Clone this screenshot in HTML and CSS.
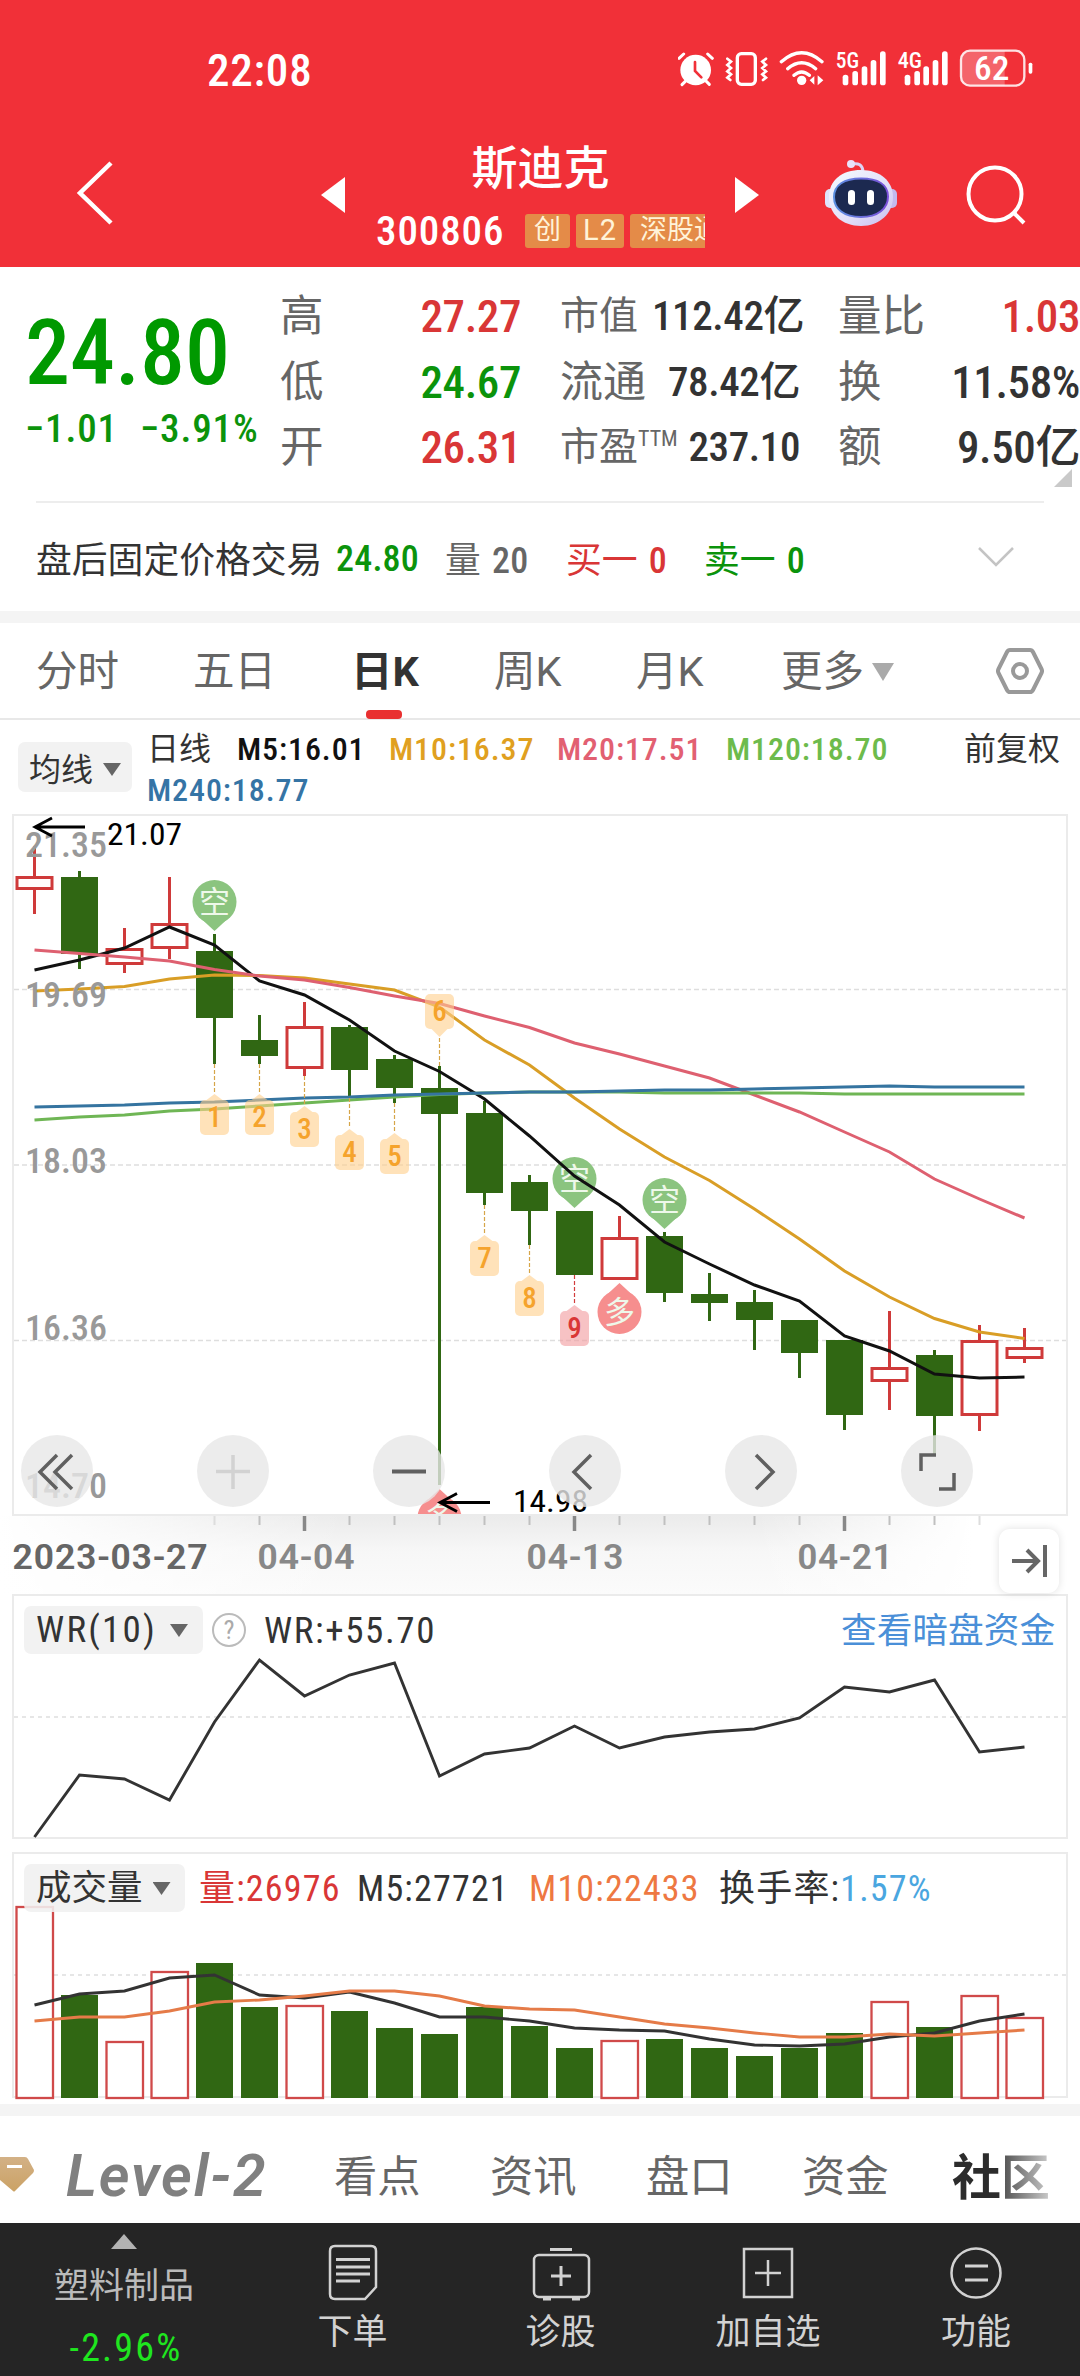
FILE: index.html
```html
<!DOCTYPE html>
<html lang="zh-CN">
<head>
<meta charset="utf-8">
<title>斯迪克 300806</title>
<link rel="stylesheet" href="styles.css">
</head>
<body>
<header class="header">
  <div class="status">
    <span class="clock">22:08</span>
    <svg class="status-icons" viewBox="415 40 1065 120">
      <g fill="none" stroke="#fff" stroke-width="7" stroke-linecap="round">
        <path d="M418 71l14-13M518 71l-14-13" stroke-width="9"/>
        <circle cx="468" cy="106" r="46" fill="#fff" stroke="none"/>
        <path d="M437 140l-10 10M500 140l9 9" stroke-width="9"/>
        <path d="M466 82v27l19 19" stroke="#f13038" stroke-width="8"/>
        <rect x="593" y="57" width="54" height="92" rx="12" stroke-width="10"/>
        <path d="M563 72l11 9-11 10 11 9-11 10 11 9-11 10 9 7M679 72l-11 9 11 10-11 9 11 10-11 9 11 10-9 7" stroke-width="8"/>
        <path d="M725 81q61-54 122 0M744 102q42-36 84 0M763 122q23-20 46 0" stroke-width="10"/>
      </g>
      <g fill="#fff">
        <circle cx="786" cy="137" r="14"/>
        <path d="M810 137l14-13v26zM851 137l-17-15v30z"/>
        <rect x="909" y="120" width="17" height="32" rx="8"/><rect x="938" y="109" width="17" height="43" rx="8"/><rect x="966" y="95" width="17" height="57" rx="8"/><rect x="993" y="76" width="17" height="76" rx="8"/><rect x="1021" y="50" width="17" height="102" rx="8"/>
        <rect x="1095" y="120" width="17" height="32" rx="8"/><rect x="1124" y="109" width="17" height="43" rx="8"/><rect x="1151" y="95" width="17" height="57" rx="8"/><rect x="1179" y="76" width="17" height="76" rx="8"/><rect x="1207" y="50" width="17" height="102" rx="8"/>
        <path d="M1288 49h107v104h-107q-25-2-25-27v-50q0-25 25-27z" opacity=".25"/>
        <rect x="1467" y="84" width="11" height="33" rx="5"/>
        <text x="888" y="99" font-size="64" textLength="70" lengthAdjust="spacingAndGlyphs">5G</text>
        <text x="1074" y="99" font-size="64" textLength="73" lengthAdjust="spacingAndGlyphs">4G</text>
        <text x="1303" y="136" font-size="98" textLength="106" lengthAdjust="spacingAndGlyphs">62</text>
      </g>
      <rect x="1264" y="48" width="190" height="105" rx="27" fill="none" stroke="#fff" stroke-width="7" opacity=".85"/>
    </svg>
  </div>
  <nav class="titlebar">
    <svg class="back" viewBox="0 0 40 66"><path d="M35 3L4 33l31 30" fill="none" stroke="#fff" stroke-width="4.5"/></svg>
    <svg class="arrow" viewBox="0 0 24 36"><path d="M24 0v36L0 18z" fill="#fff"/></svg>
    <div class="stock">
      <h1>斯迪克</h1>
      <div class="code-row">
        <span class="code">300806</span>
        <span class="tag">创</span><span class="tag l2">L2</span><span class="tag cut">深股通</span>
      </div>
    </div>
    <svg class="arrow" viewBox="0 0 24 36"><path d="M0 0v36l24-18z" fill="#fff"/></svg>
    <svg class="robot" viewBox="0 0 72 68">
      <defs>
        <linearGradient id="shell" x1="0" x2="1" y1="0" y2="1"><stop offset="0" stop-color="#f4fbff"/><stop offset=".6" stop-color="#e3def8"/><stop offset="1" stop-color="#c6bdf0"/></linearGradient>
        <linearGradient id="rim" x1="0" x2="1"><stop offset="0" stop-color="#5b8fe0"/><stop offset="1" stop-color="#7a4fd8"/></linearGradient>
      </defs>
      <path d="M27 5q10-2 11 7" fill="none" stroke="#dcd3f5" stroke-width="3"/>
      <circle cx="26" cy="5" r="4" fill="#e9e2fa"/>
      <rect x="0" y="30" width="12" height="19" rx="5" fill="#dfe3fb"/><rect x="60" y="30" width="12" height="19" rx="5" fill="#c3b9ee"/>
      <path d="M36 11C55 11 68 22 68 38S55 67 36 67 4 55 4 38 17 11 36 11z" fill="url(#shell)"/>
      <path d="M36 19.500c17 0 27 6 27 18S53 58 36 58 9 50 9 38s10-18.500 27-18.500z" fill="#1c2950" stroke="url(#rim)" stroke-width="2"/>
      <rect x="23" y="31" width="7" height="15" rx="3.500" fill="#fff"/><rect x="42" y="31" width="7" height="15" rx="3.500" fill="#fff"/>
    </svg>
    <svg class="search" viewBox="0 0 62 62"><g fill="none" stroke="#fff" stroke-width="4"><circle cx="30" cy="30" r="26.500"/><path d="M48 48l11 11"/></g></svg>
  </nav>
</header>

<section class="quote">
  <div class="last">
    <div class="price">24.80</div>
    <div class="change"><span>−1.01</span><span>−3.91%</span></div>
  </div>
  <dl class="stats">
    <dt>高</dt><dd class="up">27.27</dd>
    <dt class="mid">市值</dt><dd class="sm">112.42亿</dd>
    <dt class="last-label">量比</dt><dd class="up">1.03</dd>
    <dt>低</dt><dd class="down">24.67</dd>
    <dt class="mid wide">流通</dt><dd class="sm">78.42亿</dd>
    <dt class="last-label">换</dt><dd>11.58%</dd>
    <dt>开</dt><dd class="up">26.31</dd>
    <dt class="mid">市盈<sup>TTM</sup></dt><dd class="sm">237.10</dd>
    <dt class="last-label">额</dt><dd>9.50亿</dd>
  </dl>
  <i class="corner"></i>
</section>
<section class="fixed-price">
  <span class="fp-title">盘后固定价格交易</span><span class="down fp-price">24.80</span>
  <span class="gray fp-vol">量 <b>20</b></span><span class="up fp-buy">买一 <b>0</b></span><span class="down fp-sell">卖一 <b>0</b></span>
  <svg class="expand" viewBox="0 0 36 20"><path d="M1 1l17 17L35 1" fill="none" stroke="#c4c4c4" stroke-width="2.500"/></svg>
</section>
<div class="band"></div>

<nav class="periods">
  <span>分时</span><span>五日</span><span class="active">日K</span><span>周K</span><span>月K</span><span>更多<i class="tri"></i></span>
  <svg class="hex" viewBox="0 0 48 46"><g fill="none" stroke="#999" stroke-width="4"><path d="M14 2h20q2 0 3 2l8.500 17q1 2 0 4L37 42q-1 2-3 2H14q-2 0-3-2L2.500 25q-1-2 0-4L11 4q1-2 3-2z"/><circle cx="24" cy="23" r="7"/></g></svg>
</nav>

<section class="averages">
  <button class="picker ma">均线<i class="tri dark"></i></button>
  <div class="ma-values">
    <span class="day">日线</span><span class="m5">M5:16.01</span><span class="m10">M10:16.37</span><span class="m20">M20:17.51</span><span class="m120">M120:18.70</span>
    <span class="m240">M240:18.77</span>
  </div>
  <span class="adjust">前复权</span>
</section>

<section class="kline">
  <svg id="kline" viewBox="0 814 1080 702"></svg>
  <div class="controls">
    <svg viewBox="0 0 72 72"><path d="M36 20L19 37l17 17M51 20L34 37l17 17"/></svg>
    <svg viewBox="0 0 72 72" class="off"><path d="M36 20v34M19 36.500h34"/></svg>
    <svg viewBox="0 0 72 72"><path d="M19 36.500h34" stroke-width="4"/></svg>
    <svg viewBox="0 0 72 72"><path d="M42 20L25 37l17 17"/></svg>
    <svg viewBox="0 0 72 72"><path d="M31 20l17 17-17 17"/></svg>
    <svg viewBox="0 0 72 72"><path d="M20 36V20h15M38 54h15V38"/></svg>
  </div>
</section>
<section class="axis">
  <svg id="axis" viewBox="0 1516 1080 78"></svg>
  <button class="to-end"><svg viewBox="0 0 60 64"><path d="M13 32h25M28 21l11 11-11 11M46 16v32" fill="none" stroke="#666" stroke-width="4"/></svg></button>
</section>

<section class="panel wr">
  <svg class="plot" id="wr" viewBox="0 1594 1080 245"></svg>
  <div class="legend">
    <button class="picker wr-pick">WR(10)<i class="tri dark"></i></button>
    <span class="help">?</span><span class="wr-value">WR:+55.70</span>
    <a class="link">查看暗盘资金</a>
  </div>
</section>
<section class="panel volume">
  <svg class="plot" id="volume" viewBox="0 1852 1080 248"></svg>
  <div class="legend">
    <button class="picker">成交量<i class="tri dark"></i></button>
    <span class="up v1">量:<b>26976</b></span><span class="v2">M5:27721</span><span class="v3">M10:22433</span><span class="v4">换手率:<b>1.57%</b></span>
  </div>
</section>
<div class="band"></div>

<nav class="sections">
  <svg class="gem" viewBox="0 0 36 36"><defs><linearGradient id="gold" x1="0" x2="0" y1="0" y2="1"><stop offset="0" stop-color="#d3b186"/><stop offset="1" stop-color="#cba265"/></linearGradient></defs><path d="M0 0h25q2 0 3 2l6 11q0 2-1 3L15 34q-1 1-2 0L0 23z" fill="url(#gold)"/><path d="M7 9.500h15" stroke="#fff" stroke-width="3"/></svg>
  <span class="level">Level-2</span><span>看点</span><span>资讯</span><span>盘口</span><span>资金</span><span class="current">社区</span>
</nav>

<footer class="toolbar">
  <div class="sector"><i></i><span>塑料制品</span><b>-2.96%</b></div>
  <div class="tool"><svg viewBox="0 0 60 60"><path d="M12 4h36q5 0 5 5v36L42 57H12q-5 0-5-5V9q0-5 5-5z"/><path d="M13 17.500h34M13 25h34M13 32h34M13 39h24" stroke-width="2.800"/></svg><span>下单</span></div>
  <div class="tool"><svg viewBox="0 0 60 60"><rect x="3" y="13" width="55" height="42" rx="5"/><path d="M19 7.500h22M30 24v20M20 34h20M12 57h8M41 57h8" stroke-width="3"/></svg><span>诊股</span></div>
  <div class="tool"><svg viewBox="0 0 60 60"><path d="M6 7h48v48H6zM30 18v26M17 31h26"/></svg><span>加自选</span></div>
  <div class="tool"><svg viewBox="0 0 60 60"><circle cx="30" cy="31" r="24.500"/><path d="M19 24h23M19 38h23" stroke-width="3"/></svg><span>功能</span></div>
</footer>
<script src="charts.js"></script>
</body>
</html>
```
FILE: styles.css
```css
* { box-sizing: border-box; margin: 0; padding: 0; }
body {
  width: 1080px; height: 2376px; overflow: hidden; background: #fff; color: #333;
  font-family: Roboto, "Noto Sans CJK SC", sans-serif; font-stretch: 87.5%;
}
svg { display: block; flex: none; }
svg text { font-family: Roboto, "Noto Sans CJK SC", sans-serif; }
button { border: 0; font: inherit; color: inherit; }
b { font-weight: inherit; }
.up { color: #d93636; }
.down { color: #0b930b; }
.gray { color: #666; }
.band { height: 12px; background: #f4f4f4; }

.header { height: 267px; background: #f13038; color: #fff; }
.status { height: 120px; padding: 0 27px 0 207px; display: flex; justify-content: space-between; }
.clock { font-size: 45px; font-weight: 500; line-height: 53px; margin-top: 44px; letter-spacing: .8px; }
.status-icons { width: 355px; height: 40px; margin: 48px 20px 0 0; }
.status-icons text { font-weight: 500; }
.titlebar { height: 147px; display: grid; grid-template-columns: 76px 40px 205px 24px 31px 329px 30px 24px 66px 72px 68px 62px; }
.titlebar > * { grid-row: 1; }
.back { grid-column: 2; width: 40px; height: 66px; margin-top: 40px; }
.arrow { width: 24px; height: 36px; margin-top: 57px; grid-column: 4; }
.stock { grid-column: 6; text-align: center; overflow: hidden; }
.stock h1 { font-size: 46px; font-weight: 500; line-height: 60px; margin-top: 18px; }
.code-row { display: flex; align-items: center; height: 34px; margin-top: 16px; }
.code { flex: none; width: 149px; text-align: left; font-size: 41px; font-weight: 500; line-height: 34px; letter-spacing: .9px; }
.tag { flex: none; width: 45px; height: 34px; line-height: 32px; margin-right: 6px; border-radius: 3px; background: #e48b48; color: #fff3d8; font-size: 27px; }
.tag.l2 { width: 48px; font-size: 29px; letter-spacing: 1px; font-stretch: 100%; }
.tag.cut { width: 110px; margin: 0; padding-left: 10px; text-align: left; }
.stock + .arrow { grid-column: 8; }
.robot { grid-column: 10; width: 72px; height: 68px; margin-top: 39px; }
.search { grid-column: 12; width: 62px; height: 62px; margin-top: 44px; }

.quote { position: relative; height: 236px; display: flex; }
.quote::after { content: ""; position: absolute; left: 36px; right: 36px; bottom: 0; height: 2px; background: #ededed; }
.last { width: 280px; padding-left: 25px; }
.price { font-size: 90px; font-weight: 500; line-height: 100px; margin-top: 37px; color: #009900; letter-spacing: 0; }
.change { display: flex; font-size: 39px; line-height: 46px; margin-top: 2px; font-weight: 500; color: #0b930b; letter-spacing: .9px; }
.change span:first-child { width: 115px; }
.stats { display: grid; flex: 1; grid-template-columns: 60px 181px 39px 92px 148px 38px 80px 162px; grid-auto-rows: 65.500px; margin-top: 17px; align-content: start; line-height: 65px; }
.stats dt { font-size: 43.500px; color: #666; white-space: nowrap; }
.stats dd { font-size: 45px; font-weight: 500; text-align: right; letter-spacing: -.4px; white-space: nowrap; }
.stats .mid { grid-column: 4; font-size: 39px; }
.stats .wide { font-size: 43px; }
.stats dd.sm { font-size: 41px; letter-spacing: -.4px; }
.stats .last-label { grid-column: 7; }
.stats sup { font-size: 22px; line-height: 0; vertical-align: 14px; }
.corner { position: absolute; left: 1054px; top: 202px; width: 18px; height: 18px; background: #c9c9c9; clip-path: polygon(100% 0, 100% 100%, 0 100%); }

.fixed-price { height: 108px; padding-left: 36px; display: grid; grid-template-columns: 300px 109px 121px 138px 274px 36px; align-items: center; font-size: 35.800px; }
.fixed-price b, .fp-price { font-size: 36px; font-weight: 500; letter-spacing: .2px; }
.fixed-price b { margin-left: 3px; }
.fp-price { padding-top: 4px; }

.periods { height: 97px; border-bottom: 2px solid #e8e8e8; padding-left: 36px; display: grid; grid-template-columns: 157px 158px 143px 142px 145px 215px 50px; font-size: 41.500px; font-stretch: 100%; color: #666; line-height: 98px; white-space: nowrap; }
.periods .active { height: 96px; color: #333; font-weight: 700; position: relative; }
.active::after { content: ""; position: absolute; left: 15px; bottom: 0; width: 36px; height: 9px; border-radius: 4px; background: #e93030; }
.hex { width: 48px; height: 46px; margin-top: 25px; }
.tri { display: inline-block; width: 22px; height: 18px; background: #aaa; clip-path: polygon(0 0, 100% 0, 50% 100%); margin-left: 8px; vertical-align: 5px; }
.tri.dark { width: 18px; height: 13px; background: #666; margin-left: 10px; vertical-align: 5px; }

.averages { height: 94px; display: grid; grid-template-columns: 18px 114px 15px 817px 116px; font-size: 32px; }
.picker { background: #f2f2f2; border-radius: 7px; white-space: nowrap; }
.ma { grid-column: 2; height: 50px; margin-top: 22px; }
.ma-values { grid-column: 4; display: grid; grid-template-columns: 90px 152px 168px 169px 200px; grid-auto-rows: 41px; line-height: 41px; margin-top: 9px; white-space: nowrap; font-weight: 500; letter-spacing: .9px; }
.day, .adjust { font-size: 32px; font-weight: 400; letter-spacing: 0; }
.m5 { color: #111; }
.m10 { color: #e0a020; }
.m20 { color: #e26072; }
.m120 { color: #6dbb4c; }
.m240 { color: #3574a5; grid-column: 1 / 3; }
.adjust { line-height: 41px; margin-top: 9px; }

.kline { position: relative; height: 702px; }
.kline > svg { width: 1080px; height: 702px; }
.controls { position: absolute; left: 21px; top: 621px; display: flex; gap: 104px; }
.controls svg { width: 72px; height: 72px; border-radius: 50%; background: rgba(231, 231, 231, .8); fill: none; stroke: #606060; stroke-width: 3.500; }
.controls .off { stroke: #d2d2d2; }
.axis { position: relative; z-index: 1; height: 78px; background: linear-gradient(90deg, #fff 0, rgba(255, 255, 255, 0) 32%, rgba(255, 255, 255, 0) 70%, #fff 90%), linear-gradient(#ebebeb, #f7f7f7 45%, #fbfbfb); }
.to-end { position: absolute; left: 999px; top: 13px; width: 60px; height: 64px; background: #fff; border-radius: 11px; box-shadow: 0 0 8px rgba(0, 0, 0, .12); }

.panel { position: relative; height: 245px; }
.volume { height: 252px; margin-top: 13px; }
.plot { width: 1080px; position: absolute; left: 0; top: 0; }
.legend { position: relative; display: grid; grid-template-columns: 179px 9px 34px 18px 577px 240px; padding: 12px 0 0 24px; line-height: 50px; font-size: 36px; white-space: nowrap; letter-spacing: 1.200px; }
.legend .picker { height: 48px; line-height: 48px; text-align: left; padding-left: 12px; background: rgba(240, 240, 240, .88); letter-spacing: 0; font-size: 35.500px; }
.legend .wr-pick { font-size: 37px; letter-spacing: 2.200px; }
.legend .wr-pick .tri { margin-left: 13px; }
.help { grid-column: 3; width: 34px; height: 34px; margin-top: 7px; border: 2.500px solid #bbb; border-radius: 50%; color: #aaa; font-size: 26px; line-height: 30px; text-align: center; letter-spacing: 0; }
.wr-value { grid-column: 5; font-size: 37px; letter-spacing: 1.600px; }
.link { grid-column: 6; color: #4a8fd8; font-size: 35.700px; letter-spacing: 0; }
.volume .legend { grid-template-columns: 161px 14px 158px 172px 190px 300px; }
.v1 { grid-column: 3; }
.v3 { color: #ee7842; }
.v4 b { color: #4aa6e0; }

.sections { height: 107px; display: grid; grid-template-columns: 66px 268px 156px 156px 156px 150px 128px; align-items: center; font-size: 43.300px; color: #666; padding-top: 7px; }
.gem { width: 36px; height: 36px; margin-top: 4px; }
.level { font-stretch: 100%; font-style: italic; font-weight: 600; font-size: 59px; letter-spacing: 1.800px; color: #808080; line-height: 60px; margin-top: 6px; }
.current { width: 98px; font-size: 49px; font-weight: 700; background: linear-gradient(90deg, #2c2c2c 48%, #555 53%, #ccc 100%); background-clip: text; color: transparent; }

.toolbar { height: 153px; background: #252525; color: #d2d2d2; display: grid; grid-template-columns: 248px 209px 207px 208px 208px; font-size: 35px; }
.sector { display: flex; flex-direction: column; align-items: center; }
.sector i { width: 26px; height: 15px; margin-top: 11px; background: #b3b3b3; clip-path: polygon(50% 0, 100% 100%, 0 100%); }
.sector span { line-height: 50px; margin-top: 13px; color: #bbb; }
.sector b { color: #1fe61f; font-size: 38px; letter-spacing: 2.200px; line-height: 44px; margin-top: 14px; padding-left: 4px; }
.tool { display: flex; flex-direction: column; align-items: center; }
.tool svg { width: 60px; height: 60px; margin-top: 19px; fill: none; stroke: #d2d2d2; stroke-width: 2.500; }
.tool span { line-height: 50px; margin-top: 6px; }
```
FILE: charts.js
```js
const RED = '#cf3a3a', GREEN = '#306713';
const X = i => 34.5 + 45 * i;
const el = (tag, attrs, text) => {
  const a = Object.entries(attrs).map(([k, v]) => `${k}="${v}"`).join(' ');
  return `<${tag} ${a}>${text || ''}</${tag}>`;
};
const polyline = (ys, color, w = 3) =>
  el('polyline', { points: ys.map((y, i) => X(i) + ',' + y).join(' '), fill: 'none', stroke: color, 'stroke-width': w });
const line = (x1, y1, x2, y2, color, w, dash = 'none') =>
  el('line', { x1, y1, x2, y2, stroke: color, 'stroke-width': w, 'stroke-dasharray': dash });
const label = (x, y, size, len, fill, text, weight = 400) =>
  el('text', { x, y, 'font-size': size, textLength: len, lengthAdjust: 'spacingAndGlyphs', fill, 'font-weight': weight }, text);
const frame = (y, h) => el('rect', { x: 13, y, width: 1054, height: h, fill: 'none', stroke: '#ebebeb', 'stroke-width': 2 });

// [rising, high, bodyTop, bodyBottom, low]
const candles = [
  [1, 846, 876, 890, 914], [0, 871, 877, 954, 969], [1, 928, 948, 965, 973], [1, 877, 923, 949, 959],
  [0, 934, 951, 1018, 1064], [0, 1015, 1040, 1056, 1064], [1, 1002, 1026, 1069, 1076], [0, 1025, 1027, 1070, 1098],
  [0, 1055, 1059, 1088, 1103], [0, 1066, 1088, 1114, 1485], [0, 1101, 1113, 1193, 1205], [0, 1175, 1182, 1211, 1245],
  [0, 1211, 1211, 1275, 1275], [1, 1216, 1237, 1280, 1280], [0, 1232, 1236, 1293, 1302], [0, 1273, 1294, 1303, 1321],
  [0, 1290, 1302, 1320, 1350], [0, 1320, 1320, 1353, 1378], [0, 1340, 1340, 1415, 1430], [1, 1311, 1367, 1382, 1410],
  [0, 1350, 1355, 1416, 1454], [1, 1325, 1340, 1416, 1431], [1, 1328, 1347, 1359, 1363]
];
const averages = [
  ['#111', [970, 960, 948, 927, 945, 981, 995, 1020, 1051, 1071.5, 1099, 1136, 1176, 1205, 1242, 1264, 1285, 1301, 1336, 1351, 1374, 1378, 1377]],
  ['#d99e26', [991, 989, 986.5, 979, 975, 975.5, 978, 984, 990, 1007, 1040, 1065, 1098, 1129, 1157, 1180.5, 1209, 1239, 1271, 1297, 1318.5, 1332, 1338.5]],
  ['#de6070', [950, 953.5, 957, 961, 969.5, 976, 980, 987.5, 996, 1003.5, 1016, 1027.5, 1043, 1054, 1066, 1078, 1095, 1112, 1132, 1152, 1179, 1199, 1218]],
  ['#6fb655', [1120, 1117, 1115, 1111, 1109, 1106, 1103, 1100, 1097, 1094.5, 1093, 1092, 1092, 1092, 1093, 1093, 1093, 1093, 1094, 1094, 1094, 1094, 1094]],
  ['#3574a0', [1107, 1106, 1105, 1103, 1102, 1100, 1098, 1097, 1095, 1094, 1093, 1092, 1092, 1091, 1090, 1090, 1089, 1088, 1087, 1086, 1087, 1087, 1087]]
];

function pin(i, cy, tip, color, char) {
  const x = X(i), d = tip > cy ? 1 : -1;
  return el('g', { fill: color },
    el('circle', { cx: x, cy, r: 22 }) +
    el('path', { d: `M${x - 13} ${cy + 17 * d}L${x} ${tip}L${x + 13} ${cy + 17 * d}z` })) +
    el('text', { x, y: cy + 11, 'font-size': 31, 'text-anchor': 'middle', fill: '#eef8ea' }, char);
}
function badge(i, top, n, from, down) {
  const x = X(i), hot = n === 9, c = hot ? '#d23c3c' : '#d6a548';
  const tip = down ? `M${x - 8} ${top + 35}l8 8l8 -8z` : `M${x - 8} ${top}l8 -6l8 6z`;
  return line(x, from, x, down ? top + 44 : top - 7, c, 1.2, '4 2') +
    el('g', { fill: hot ? '#f29a9e' : '#ffcf8c', opacity: .6 },
      el('rect', { x: x - 14.5, y: top, width: 29, height: 35, rx: 5 }) + el('path', { d: tip })) +
    el('text', { x, y: top + 27, 'font-size': 29, 'text-anchor': 'middle', 'font-weight': 500, fill: hot ? '#d93636' : '#f5a32c' }, n);
}
const pointer = (x, y) => el('path', { d: `M${x + 51} ${y}H${x + 1}M${x + 18} ${y - 9}L${x + 1} ${y}l17 9`, fill: 'none', stroke: '#000', 'stroke-width': 2.8 });

function drawKline() {
  let s = '';
  for (const y of [989.5, 1165, 1340.5]) s += line(14, y, 1066, y, '#dedede', 1.3, '5 3');
  candles.forEach(([rising, high, top, bottom, low], i) => {
    const c = rising ? RED : GREEN;
    s += line(X(i), high, X(i), top, c, 3) + line(X(i), bottom, X(i), low, c, 3);
    s += rising
      ? el('rect', { x: X(i) - 17.5, y: top + 1.5, width: 35, height: bottom - top - 3, fill: '#fff', stroke: c, 'stroke-width': 3 })
      : el('rect', { x: X(i) - 18.5, y: top, width: 37, height: bottom - top, fill: c });
  });
  s += pin(4, 902, 931, '#8bc47f', '空') + pin(12, 1179, 1208, '#8bc47f', '空') + pin(14, 1200, 1229, '#8bc47f', '空');
  s += pin(13, 1312, 1283, '#f68e8e', '多') + pin(9, 1518, 1489, '#f68e8e', '多');
  for (const [c, ys] of averages) s += polyline(ys, c, 3);
  s += badge(4, 1100, 1, 1064) + badge(5, 1100, 2, 1064) + badge(6, 1112, 3, 1076) + badge(7, 1135, 4, 1098) +
    badge(8, 1139, 5, 1103) + badge(9, 994, 6, 1066, true) + badge(10, 1241, 7, 1205) + badge(11, 1281, 8, 1245) + badge(12, 1311, 9, 1275);
  [['21.35', 857], ['19.69', 1007], ['18.03', 1173], ['16.36', 1340], ['14.70', 1498]].forEach(([t, y]) => {
    s += label(25, y, 35, 82, '#999', t, 500);
  });
  s += pointer(34, 827) + label(107, 845, 31, 75, '#000', '21.07') + pointer(439, 1502.5) + label(513, 1512, 31, 75, '#000', '14.98');
  s += frame(815, 700);
  document.getElementById('kline').innerHTML = s;
}
function drawAxis() {
  let s = '';
  for (let i = 4; i <= 21; i++) {
    const major = [6, 12, 18].includes(i);
    s += line(X(i), 1516, X(i), major ? 1531 : 1525, major ? '#888' : i === 4 || i === 21 ? '#ddd' : '#c0c0c0', major ? 3.5 : 2);
  }
  s += label(12, 1569, 35, 196, '#666', '2023-03-27', 500) + label(257, 1569, 35, 98, '#888', '04-04', 500) +
    label(526, 1569, 35, 98, '#888', '04-13', 500) + label(797, 1569, 35, 96, '#888', '04-21', 500);
  document.getElementById('axis').innerHTML = s;
}
function drawWr() {
  const ys = [1837, 1775, 1779, 1800, 1722, 1660, 1696, 1675, 1663, 1776, 1754, 1748, 1726, 1748, 1737, 1732, 1729, 1718, 1687, 1692, 1680, 1752, 1747];
  document.getElementById('wr').innerHTML = frame(1595, 243) + line(14, 1717, 1066, 1717, '#e6e6e6', 2, '4 4') + polyline(ys, '#333', 2.9);
}
function drawVolume() {
  const tops = [1906, 1995, 2041, 1971, 1963, 2007, 2005, 2011, 2028, 2034, 2007, 2026, 2048, 2040, 2039, 2048, 2056, 2048, 2033, 2001, 2027, 1995, 2017];
  let s = frame(1853, 244) + line(14, 1975, 1066, 1975, '#e6e6e6', 2, '4 4');
  tops.forEach((y, i) => {
    s += candles[i][0]
      ? el('rect', { x: X(i) - 18, y: y + 1, width: 36.5, height: 2097 - y, fill: '#fff', stroke: '#d04a4a', 'stroke-width': 2.3 })
      : el('rect', { x: X(i) - 18.5, y, width: 37, height: 2098 - y, fill: GREEN });
  });
  s += polyline([2005, 1994, 1991, 1978, 1975, 1995, 1998, 1992, 2003, 2017, 2017, 2021, 2028, 2030, 2031, 2039, 2045, 2046, 2044, 2037, 2033, 2021, 2014], '#333', 2.9);
  s += polyline([2021, 2017, 2017, 2011, 2002, 2000, 1996, 1991, 1991, 1996, 2006, 2009, 2010, 2017, 2024, 2028, 2033, 2037, 2037, 2034, 2036, 2033, 2030], '#e57b48', 2.9);
  document.getElementById('volume').innerHTML = s;
}
drawKline();
drawAxis();
drawWr();
drawVolume();
```
